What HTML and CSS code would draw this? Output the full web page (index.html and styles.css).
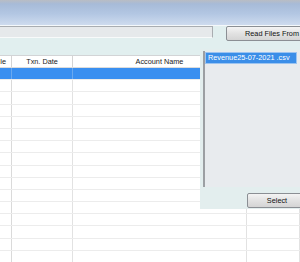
FILE: index.html
```html
<!DOCTYPE html>
<html>
<head>
<meta charset="UTF-8">
<title>Import Revenue Files</title>
<link rel="stylesheet" href="styles.css">
</head>
<body>

  <div class="titlebar"></div>

  <div class="toolbar">
    <div class="pathbox"></div>
    <button type="button" class="readbtn">Read Files From</button>
  </div>

  <div class="main">
    <div class="grid">
      <div class="row head">
        <div class="cell first">le</div>
        <div class="cell">Txn. Date</div>
        <div class="cell">Account Name</div>
        <div class="cell"></div>
      </div>
      <div class="row sel">
        <div class="cell first"></div><div class="cell"></div><div class="cell"></div><div class="cell"></div>
      </div>
      <div class="row"><div class="cell first"></div><div class="cell"></div><div class="cell"></div><div class="cell"></div></div>
      <div class="row"><div class="cell first"></div><div class="cell"></div><div class="cell"></div><div class="cell"></div></div>
      <div class="row"><div class="cell first"></div><div class="cell"></div><div class="cell"></div><div class="cell"></div></div>
      <div class="row"><div class="cell first"></div><div class="cell"></div><div class="cell"></div><div class="cell"></div></div>
      <div class="row"><div class="cell first"></div><div class="cell"></div><div class="cell"></div><div class="cell"></div></div>
      <div class="row"><div class="cell first"></div><div class="cell"></div><div class="cell"></div><div class="cell"></div></div>
      <div class="row"><div class="cell first"></div><div class="cell"></div><div class="cell"></div><div class="cell"></div></div>
      <div class="row"><div class="cell first"></div><div class="cell"></div><div class="cell"></div><div class="cell"></div></div>
      <div class="row"><div class="cell first"></div><div class="cell"></div><div class="cell"></div><div class="cell"></div></div>
      <div class="row"><div class="cell first"></div><div class="cell"></div><div class="cell"></div><div class="cell"></div></div>
      <div class="row"><div class="cell first"></div><div class="cell"></div><div class="cell"></div><div class="cell"></div></div>
      <div class="row"><div class="cell first"></div><div class="cell"></div><div class="cell"></div><div class="cell"></div></div>
      <div class="row"><div class="cell first"></div><div class="cell"></div><div class="cell"></div><div class="cell"></div></div>
      <div class="row"><div class="cell first"></div><div class="cell"></div><div class="cell"></div><div class="cell"></div></div>
      <div class="row"><div class="cell first"></div><div class="cell"></div><div class="cell"></div><div class="cell"></div></div>
    </div>

    <div class="filepanel">
      <div class="filelist">
        <div class="fileitem">Revenue25-07-2021 .csv</div>
      </div>
      <div class="panelfoot">
        <button type="button" class="selectbtn">Select</button>
      </div>
    </div>
  </div>

</body>
</html>
```

FILE: styles.css
```css
body {
  margin: 0;
  width: 300px;
  height: 262px;
  overflow: hidden;
  background-color: #ffffff;
  font-family: "Liberation Sans", Arial, sans-serif;
  font-size: 7.3px;
  color: #1a1a1a;
}

.titlebar {
  height: 25px;
  background: linear-gradient(#b9bdc4 0px, #a7bbd8 4px, #b3c7e3 14px, #cedbee 25px);
}

.toolbar {
  display: flex;
  align-items: flex-start;
  height: 29px;
  overflow: hidden;
  background-color: #e1efef;
  border-top: 1px solid #f4f8fb;
}

.pathbox {
  flex: none;
  width: 212px;
  height: 10px;
  background-color: #e6e9eb;
  border: 1px solid #a9adb1;
  border-left: none;
  border-bottom: 1px solid #f8fafa;
}

.readbtn {
  flex: none;
  margin: 0 0 0 13px;
  width: 92px;
  height: 15px;
  padding: 0;
  font-family: "Liberation Sans", Arial, sans-serif;
  font-size: 7.3px;
  color: #111111;
  background: linear-gradient(#f4f4f4, #e2e2e2 50%, #d4d4d4);
  border: 1px solid #8b8f94;
  border-radius: 2px;
}

.main {
  position: relative;
}

.grid {
  border-top: 1px solid #d2d4d6;
}

.row {
  display: grid;
  grid-template-columns: 12px 61px 174px 1fr;
  height: 12.2px;
  box-sizing: border-box;
  border-bottom: 1px solid #ececec;
}

.cell {
  border-right: 1px solid #e2e2e2;
  text-align: center;
  line-height: 11px;
  white-space: nowrap;
  overflow: hidden;
}

.cell.first {
  text-align: right;
  padding-right: 5px;
  border-right-color: #dadada;
}

.head {
  height: 12px;
  border-bottom: 1px solid #dcdcdc;
}

.head .cell {
  border-right-color: #d4d4d4;
}

.sel {
  background-color: #3a8ff0;
}

.sel .cell {
  border-right-color: #6aa9f0;
}

.filepanel {
  position: absolute;
  left: 200px;
  top: -6px;
  width: 100px;
  height: 160px;
  overflow: hidden;
  background-color: #e3eeee;
  display: flex;
  flex-direction: column;
}

.filelist {
  margin: 2px 0 0 3px;
  height: 135px;
  background-color: #e8ebee;
  border-left: 2px solid #9c9fa3;
  padding-top: 1px;
}

.fileitem {
  width: 88px;
  height: 10px;
  line-height: 10px;
  padding-left: 2px;
  color: #ffffff;
  background-color: #3b8ee8;
  border: 1px solid #9cc4f0;
  white-space: nowrap;
}

.panelfoot {
  display: flex;
  padding: 6px 0 0 47px;
}

.selectbtn {
  flex: none;
  width: 60px;
  height: 15px;
  padding: 0;
  font-family: "Liberation Sans", Arial, sans-serif;
  font-size: 7.3px;
  color: #111111;
  background: linear-gradient(#f4f4f4, #e2e2e2 50%, #d4d4d4);
  border: 1px solid #8b8f94;
  border-radius: 2px;
}
```
